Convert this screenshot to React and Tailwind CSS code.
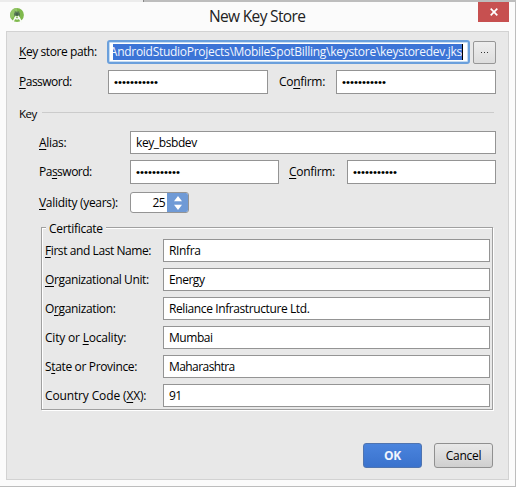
import React from "react";

const dots = "•".repeat(11);

function Label({ text, mark, className = "" }) {
  const i = mark === undefined ? -1 : mark;
  return (
    <span className={`block shrink-0 whitespace-pre leading-4 ${className}`}>
      {i < 0 ? text : (
        <>
          {text.slice(0, i)}
          <span className="underline decoration-1 underline-offset-2">{text[i]}</span>
          {text.slice(i + 1)}
        </>
      )}
    </span>
  );
}

function Field({ value, password, className = "" }) {
  return (
    <div className={`flex shrink-0 items-center border border-[#949494] bg-white pl-[5px] ${className}`}>
      {password ? (
        <span className="font-['Liberation_Sans',sans-serif] text-[11.4px] leading-4 tracking-[0.01px]">{dots}</span>
      ) : (
        <span className="whitespace-pre leading-4">{value}</span>
      )}
    </div>
  );
}

const certificate = [
  { text: "First and Last Name:", mark: 0, value: "RInfra", label: "tracking-[-0.42px]", field: "tracking-[-0.35px]" },
  { text: "Organizational Unit:", mark: 0, value: "Energy", label: "tracking-[-0.38px]", field: "tracking-[-0.45px]" },
  { text: "Organization:", mark: 1, value: "Reliance Infrastructure Ltd.", label: "tracking-[-0.36px]", field: "tracking-[-0.4px]" },
  { text: "City or Locality:", mark: 8, value: "Mumbai", label: "tracking-[-0.2px]", field: "tracking-[-0.45px]" },
  { text: "State or Province:", mark: 1, value: "Maharashtra", label: "tracking-[-0.35px]", field: "tracking-[-0.57px]" },
  { text: "Country Code (XX):", mark: 14, value: "91", label: "tracking-[-0.14px]", field: "tracking-[-0.6px]" },
];

function AndroidStudioIcon() {
  return (
    <svg width="15" height="16" viewBox="0 0 15 16" className="shrink-0">
      <circle cx="7" cy="7" r="6.9" fill="#7fb94c" />
      <path d="M7 0.1A6.9 6.9 0 0 0 1 10.500L7 6Z" fill="#93c567" />
      <path d="M4 6.500a3 3 0 0 1 6 0v1.200H4z" fill="#5a7a55" />
      <path d="M4.800 2.800l.8 1.300M9.200 2.800l-.8 1.300" stroke="#5a7a55" strokeWidth=".8" />
      <path d="M6.200 8 2.500 14.500M7.800 8l4.200 6.500" fill="none" stroke="#f7faf5" strokeWidth="1.500" />
      <path d="M4.200 9.800q2.800 2.400 5.800 0" fill="none" stroke="#f7faf5" strokeWidth="1.300" />
      <circle cx="7" cy="6.400" r="1.300" fill="#46634a" />
    </svg>
  );
}

export default function App() {
  return (
    <div className="flex h-[487px] w-[516px] flex-col overflow-hidden bg-[#bdbdbd] font-['Open_Sans','Noto_Sans',sans-serif] text-[12px] tracking-[-0.3px] text-black">
      <div className="flex h-[2px] shrink-0">
        <div className="w-[143px] bg-[#ececec]" />
        <div className="w-px bg-[#888]" />
      </div>
      <div className="flex h-[484px] w-[515px] shrink-0 flex-col bg-[#fbfbfb]">
        <div className="flex h-[29px] shrink-0">
          <div className="w-[209px] pl-[10px] pt-[6px]"><AndroidStudioIcon /></div>
          <div className="w-[269px] pt-[4px] text-[15.5px] leading-5 tracking-[-0.66px] text-[#222]">New Key Store</div>
          <div className="flex h-5 w-[31px] items-center justify-center bg-[#c75050]">
            <svg width="8" height="8" viewBox="0 0 8 8"><path d="M.7.7 7.3 7.3M7.3.7.7 7.3" stroke="white" strokeWidth="1.7" /></svg>
          </div>
        </div>

        <div className="ml-[6px] flex h-[449px] w-[503px] flex-col border border-[#d2d2d2] bg-[#e8e8e8] pl-3">
          <div className="mt-2 flex h-6 items-center">
            <Label text="Key store path:" mark={0} className="w-[88px] tracking-[-0.42px]" />
            <div className="flex h-6 w-[363px] items-center rounded-[3px] border-2 border-[#6ba0dc] bg-[#c5dcf3] p-px">
              <div className="flex h-full w-full items-center overflow-hidden bg-white pl-[3px]">
                <div className="flex h-4 w-[350px] items-center justify-end overflow-hidden border-r border-black bg-[#3c74d6] text-[#f2f6fd]">
                  <span className="whitespace-pre tracking-[-0.28px]">AndroidStudioProjects\MobileSpotBilling\keystore\keystoredev.jks</span>
                </div>
              </div>
            </div>
            <div className="ml-[3px] flex h-[23px] w-[23px] items-center justify-center rounded-[2px] border border-[#979797] bg-gradient-to-b from-[#eeeeee] to-[#dddddd]">
              <div className="flex gap-[2px]">
                <i className="h-px w-px bg-[#333]" />
                <i className="h-px w-px bg-[#333]" />
                <i className="h-px w-px bg-[#333]" />
              </div>
            </div>
          </div>

          <div className="mt-[6px] flex h-6 items-center">
            <Label text="Password:" mark={0} className="w-[89px] tracking-[-0.5px]" />
            <Field password className="h-6 w-[160px]" />
            <Label text="Confirm:" mark={2} className="ml-[11px] w-[57px]" />
            <Field password className="h-6 w-[160px]" />
          </div>

          <div className="mt-3 flex h-4 items-center">
            <Label text="Key" className="w-[23px] text-[11.5px] tracking-[-0.5px]" />
            <div className="mb-[3px] h-px w-[452px] bg-[#cbcbcb]" />
          </div>

          <div className="ml-5 mt-[9px] flex h-[23px] items-center">
            <Label text="Alias:" mark={0} className="w-[91px]" />
            <Field value="key_bsbdev" className="h-[23px] w-[366px] tracking-[-0.4px]" />
          </div>

          <div className="ml-5 mt-[6px] flex h-6 items-center">
            <Label text="Password:" mark={2} className="w-[91px] tracking-[-0.5px]" />
            <Field password className="h-6 w-[149px]" />
            <Label text="Confirm:" mark={0} className="ml-[10px] w-[58px]" />
            <Field password className="h-6 w-[149px]" />
          </div>

          <div className="ml-5 mt-2 flex h-[21px] items-center">
            <Label text="Validity (years):" mark={0} className="w-[91px]" />
            <div className="flex h-[21px] w-[59px] overflow-hidden rounded-[3px] border border-[#949494] bg-white">
              <div className="w-[36px] pr-[2px] text-right leading-[19px] tracking-[-0.6px]">25</div>
              <div className="flex flex-1 items-center justify-center bg-[#6f9ad6]">
                <svg width="8" height="14" viewBox="0 0 8 14" fill="white"><path d="M0 5.2 4 0 8 5.2zM0 8.8 4 14 8 8.8z" /></svg>
              </div>
            </div>
          </div>

          <div className="relative ml-[22px] mt-[14px] flex h-[183px] w-[452px] flex-col gap-[6px] border border-[#a0a0a0] pl-[3px] pt-[11px] shadow-[1px_1px_0_#fff,inset_1px_1px_0_#fff]">
            <div className="absolute -top-[7px] left-1 bg-[#e8e8e8] px-[3px]"><Label text="Certificate" /></div>
            {certificate.map((row) => (
              <div key={row.text} className="flex h-[23px] shrink-0 items-center">
                <Label text={row.text} mark={row.mark} className={`w-[118px] ${row.label}`} />
                <Field value={row.value} className={`h-[23px] w-[327px] ${row.field}`} />
              </div>
            ))}
          </div>

          <div className="ml-[344px] mt-[33px] flex gap-3">
            <div className="flex h-[25px] w-[59px] items-center justify-center rounded-[3px] border border-[#4f74b0] bg-gradient-to-b from-[#4a84dd] to-[#3a72cd] font-bold text-[#f0f5fd]">OK</div>
            <div className="flex h-[25px] w-[59px] items-center justify-center rounded-[3px] border border-[#909090] bg-gradient-to-b from-[#e9e9e9] to-[#cfcfcf]">Cancel</div>
          </div>
        </div>
      </div>
    </div>
  );
}
